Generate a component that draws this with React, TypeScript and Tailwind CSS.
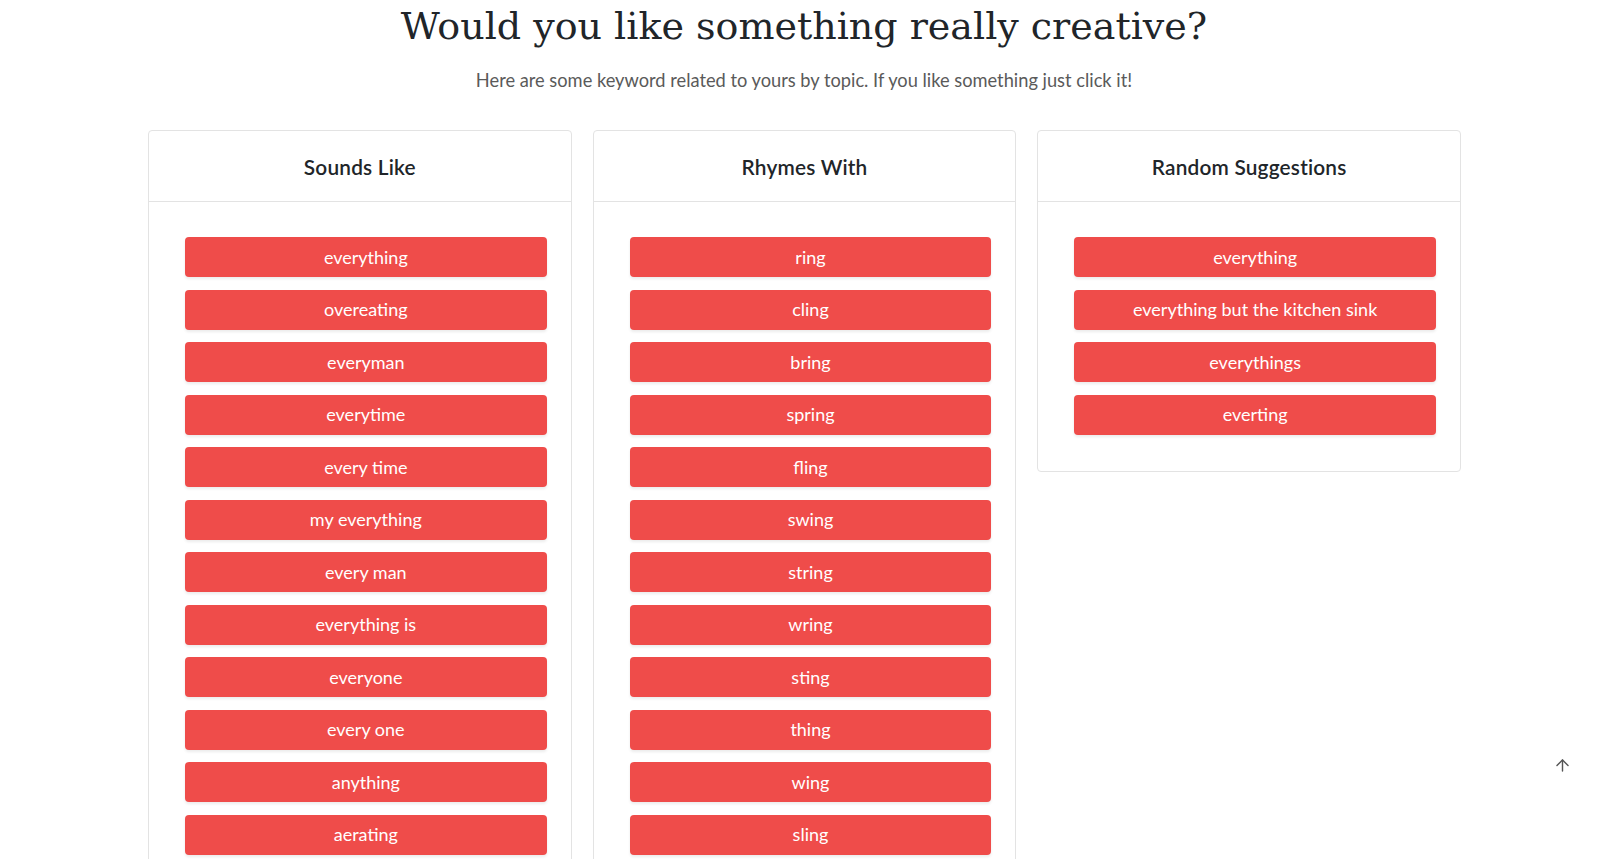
import React from 'react';
import { ArrowUp } from 'lucide-react';

const columns: { title: string; words: string[] }[] = [
  {
    title: 'Sounds Like',
    words: [
      'everything',
      'overeating',
      'everyman',
      'everytime',
      'every time',
      'my everything',
      'every man',
      'everything is',
      'everyone',
      'every one',
      'anything',
      'aerating',
    ],
  },
  {
    title: 'Rhymes With',
    words: ['ring', 'cling', 'bring', 'spring', 'fling', 'swing', 'string', 'wring', 'sting', 'thing', 'wing', 'sling'],
  },
  {
    title: 'Random Suggestions',
    words: ['everything', 'everything but the kitchen sink', 'everythings', 'everting'],
  },
];

const sans = { fontFamily: 'Lato, "Open Sans", sans-serif' };

const App: React.FC = () => {
  return (
    <div className="min-h-screen bg-white" style={sans}>
      {/* Header */}
      <div className="text-center pt-[1px] pl-[8px]">
        <h1
          className="text-[38px] leading-[50px] text-[#212529]"
          style={{ fontFamily: '"DejaVu Serif", "Liberation Serif", serif' }}
        >
          Would you like something really creative?
        </h1>
        <p className="mt-[17px] text-[18.25px] leading-6 text-[#5a5a5a]">
          Here are some keyword related to yours by topic. If you like something just click it!
        </p>
      </div>

      {/* Columns */}
      <div className="ml-[148px] mt-[38px] w-[1313px] grid grid-cols-3 gap-[21px] items-start">
        {columns.map((col) => (
          <div key={col.title} className="border border-[#e3e3e3] rounded-[4px] bg-white">
            <div className="h-[71px] pt-[1px] flex items-center justify-center border-b border-[#e3e3e3]">
              <h2 className="text-[20.8px] font-semibold text-[#212529] tracking-[0.2px]">{col.title}</h2>
            </div>
            <div className="pt-[35px] pb-[36px] pl-[36px] pr-[24px] flex flex-col gap-[12.5px]">
              {col.words.map((w, i) => (
                <button
                  key={w + i}
                  className="h-10 w-full rounded-[4px] bg-[#ef4c4a] text-white text-[18px] shadow-[0_2px_3px_rgba(0,0,0,0.08)]"
                >
                  {w}
                </button>
              ))}
            </div>
          </div>
        ))}
      </div>

      {/* Scroll to top */}
      <button className="fixed right-[28px] bottom-[84px] text-[#555]">
        <ArrowUp className="w-[19px] h-[19px]" strokeWidth={1.8} />
      </button>
    </div>
  );
};

export default App;
